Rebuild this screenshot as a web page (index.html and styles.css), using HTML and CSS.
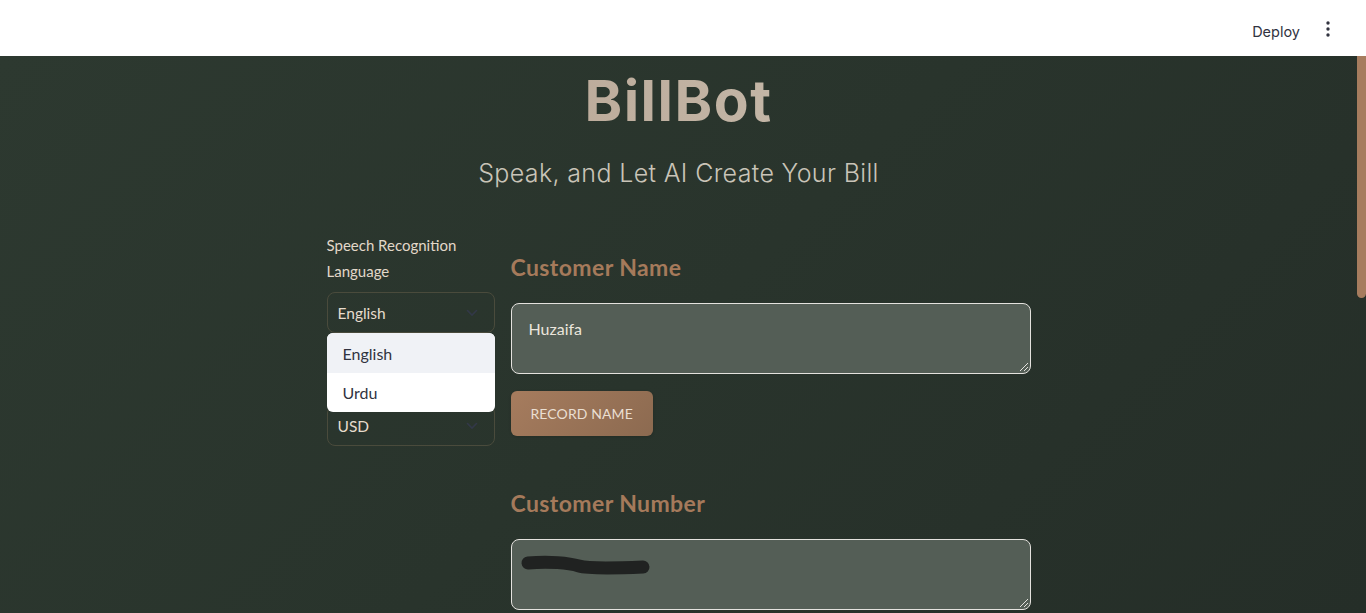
FILE: index.html
```html
<!DOCTYPE html>
<html lang="en">
<head>
<meta charset="utf-8">
<title>BillBot</title>
<link rel="stylesheet" href="styles.css">
</head>
<body>
<header class="topbar">
  <span class="deploy">Deploy</span>
  <span class="kebab" aria-label="menu">
    <svg width="4" height="16" viewBox="0 0 4 16"><circle cx="2" cy="2" r="1.7"/><circle cx="2" cy="8" r="1.7"/><circle cx="2" cy="14" r="1.7"/></svg>
  </span>
</header>
<main class="app">
  <div class="content">
    <div class="container">
      <h1 class="title">BillBot</h1>
      <p class="subtitle">Speak, and Let AI Create Your Bill</p>
      <div class="columns">
        <aside class="side">
          <label class="side-label">Speech Recognition Language</label>
          <div class="select-wrap">
            <div class="select">
              <span>English</span>
              <svg class="chev" width="12" height="8" viewBox="0 0 12 8"><path d="M1.5 1.5 6 6l4.5-4.5" fill="none" stroke-width="1.6" stroke-linecap="round"/></svg>
            </div>
            <ul class="menu">
              <li class="menu-item active">English</li>
              <li class="menu-item">Urdu</li>
            </ul>
          </div>
          <div class="select second">
            <span>USD</span>
            <svg class="chev" width="12" height="8" viewBox="0 0 12 8"><path d="M1.5 1.5 6 6l4.5-4.5" fill="none" stroke-width="1.6" stroke-linecap="round"/></svg>
          </div>
        </aside>
        <section class="main-col">
          <h3 class="field-title">Customer Name</h3>
          <div class="textarea"><span>Huzaifa</span><span class="grip"></span></div>
          <button class="btn">RECORD NAME</button>
          <h3 class="field-title second">Customer Number</h3>
          <div class="textarea">
            <svg class="redact" width="132" height="24" viewBox="0 0 132 24"><path d="M9 9 C 30 7, 50 9, 60 12 S 100 14, 124 13" fill="none" stroke="#202221" stroke-width="13" stroke-linecap="round"/></svg>
            <span class="grip"></span>
          </div>
        </section>
      </div>
    </div>
  </div>
  <div class="scrollbar"><div class="thumb"></div></div>
</main>
</body>
</html>
```
FILE: styles.css
```css
html, body {
  margin: 0;
  padding: 0;
  height: 100%;
  overflow: hidden;
}
body {
  font-family: "Lato", "Noto Sans", sans-serif;
  background: #fff;
}
.topbar {
  height: 56px;
  background: #ffffff;
  display: flex;
  align-items: center;
  justify-content: flex-end;
  padding-right: 36px;
  gap: 26px;
  box-sizing: border-box;
}
.deploy {
  font-family: "Inter", sans-serif;
  font-size: 14.5px;
  color: #31333f;
  margin-top: 6px;
}
.kebab { margin-top: 2px; }
.kebab svg { fill: #31333f; display: block; }
.app {
  height: calc(100% - 56px);
  display: flex;
  overflow: hidden;
  background: linear-gradient(135deg, #2d3930 0%, #29342c 50%, #252e28 100%);
}
.content {
  flex: 1;
  min-width: 0;
}
.scrollbar {
  width: 9px;
  flex: none;
}
.thumb {
  height: 242px;
  background: #a67c5e;
  border-radius: 0 0 5px 5px;
}
.container {
  width: 704px;
  margin: 0 auto;
  padding-top: 10px;
}
.title {
  margin: 0;
  text-align: center;
  font-family: "Inter", sans-serif;
  font-weight: 700;
  font-size: 57px;
  line-height: 70px;
  letter-spacing: 1.5px;
  color: #bda999;
  background: linear-gradient(90deg, #b5a08f, #cbc2b3);
  -webkit-background-clip: text;
  background-clip: text;
  -webkit-text-fill-color: transparent;
}
.subtitle {
  margin: 21px 0 0;
  text-align: center;
  font-family: "Inter", sans-serif;
  font-weight: 300;
  font-size: 25px;
  line-height: 32px;
  letter-spacing: 0.35px;
  color: #c9c4b8;
}
.columns {
  display: grid;
  grid-template-columns: 168px 520px;
  gap: 16px;
  margin-top: 43px;
}
.side-label {
  display: block;
  font-size: 15px;
  line-height: 26px;
  color: #e2d8c9;
  padding-right: 14px;
}
.select-wrap { position: relative; margin-top: 8px; }
.select {
  height: 41px;
  box-sizing: border-box;
  border: 1px solid #4a4b3c;
  border-radius: 8px;
  display: flex;
  align-items: center;
  justify-content: space-between;
  padding: 0 16px 0 10px;
  font-size: 15.5px;
  color: #e6dccc;
}
.select.second { margin-top: 72px; }
.chev { stroke: #323848; }
.menu {
  position: absolute;
  top: 41px;
  left: 0;
  right: 0;
  margin: 0;
  padding: 0;
  list-style: none;
  background: #ffffff;
  border-radius: 6px;
  overflow: hidden;
  z-index: 5;
}
.menu-item {
  height: 40px;
  display: flex;
  align-items: center;
  padding-left: 16px;
  font-size: 16px;
  color: #31333f;
}
.menu-item.active { background: #f0f2f6; }
.menu-item + .menu-item { height: 39px; }
.field-title {
  margin: 20px 0 0;
  font-size: 23px;
  line-height: 30px;
  font-weight: 700;
  color: #a57a5b;
  letter-spacing: 0.4px;
}
.field-title.second { margin-top: 52px; }
.textarea {
  position: relative;
  margin-top: 21px;
  height: 71px;
  box-sizing: border-box;
  background: #545e56;
  border: 1px solid #e4e2de;
  border-radius: 8px;
  padding: 14px 17px;
  font-size: 16px;
  line-height: 22px;
  color: #ebe5dc;
}
.grip {
  position: absolute;
  right: 2px;
  bottom: 2px;
  width: 8px;
  height: 8px;
  background: linear-gradient(135deg, transparent 45%, #e4e2de 45%, #e4e2de 55%, transparent 55%, transparent 70%, #e4e2de 70%, #e4e2de 80%, transparent 80%);
}
.redact {
  display: block;
  margin-left: -10px;
  margin-top: 0;
}
.btn {
  margin-top: 17px;
  height: 45px;
  padding: 0 20px;
  border: none;
  border-radius: 6px;
  background: linear-gradient(135deg, #a67c5e, #8c6a50);
  color: #eadfd2;
  font-family: "Lato", "Noto Sans", sans-serif;
  font-size: 14px;
  letter-spacing: 0.1px;
  box-shadow: 0 1px 3px rgba(0,0,0,0.15);
}
```
